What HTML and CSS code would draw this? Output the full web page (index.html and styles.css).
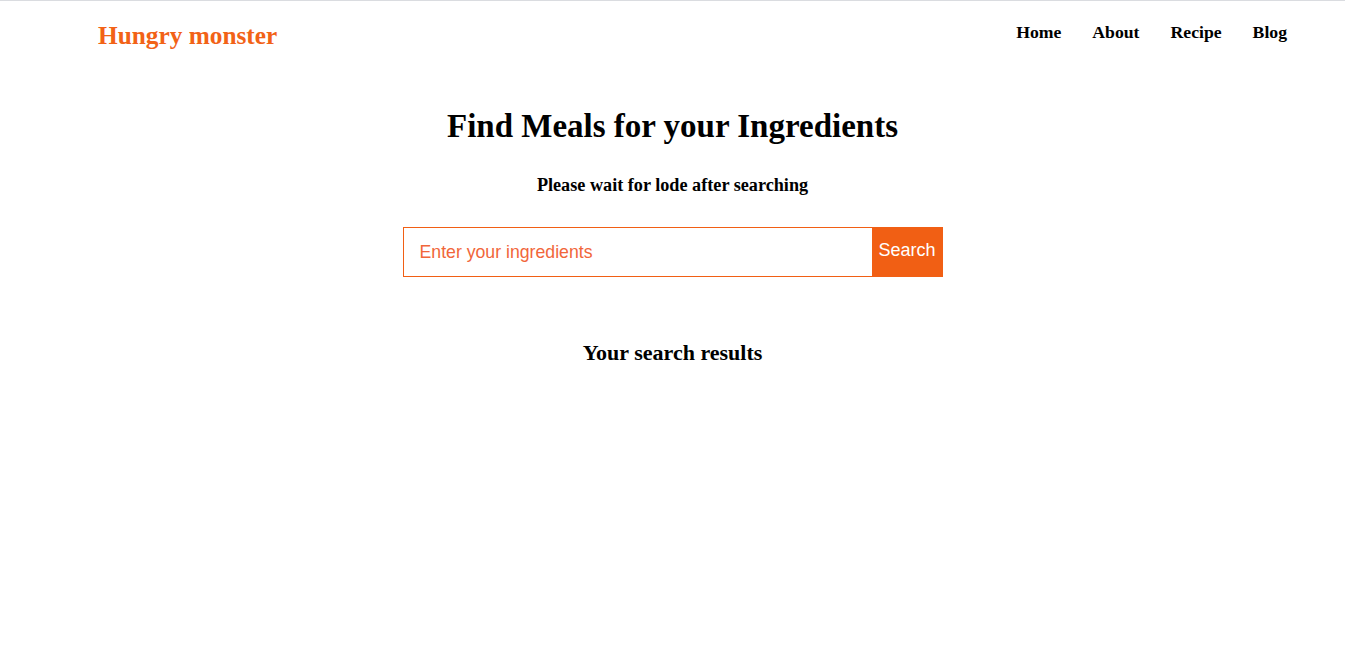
FILE: index.html
```html
<!DOCTYPE html>
<html>
<head>
<meta charset="utf-8">
<link rel="stylesheet" href="styles.css">
</head>
<body>
<header class="topbar">
  <div class="logo">Hungry monster</div>
  <nav class="nav">
    <a href="#">Home</a>
    <a href="#">About</a>
    <a href="#">Recipe</a>
    <a href="#">Blog</a>
  </nav>
</header>
<main class="main">
  <h1 class="title">Find Meals for your Ingredients</h1>
  <p class="note">Please wait for lode after searching</p>
  <div class="search">
    <input class="search-input" type="text" placeholder="Enter your ingredients">
    <button class="search-btn">Search</button>
  </div>
  <h2 class="results">Your search results</h2>
</main>
</body>
</html>
```
FILE: styles.css
```css
html, body {
  margin: 0;
  padding: 0;
  background: #fff;
}
body {
  font-family: "Liberation Serif", "Times New Roman", serif;
  border-top: 1px solid #dadce0;
}
.topbar {
  display: flex;
  justify-content: space-between;
  align-items: flex-start;
  padding: 20px 58px 0 98px;
  height: 47px;
}
.logo {
  color: #f26216;
  font-weight: bold;
  font-size: 25.3px;
  line-height: 29px;
}
.nav {
  display: flex;
  gap: 31px;
  padding-top: 0;
}
.nav a {
  color: #000;
  text-decoration: none;
  font-weight: bold;
  font-size: 17.7px;
  line-height: 22px;
}
.main {
  display: flex;
  flex-direction: column;
  align-items: center;
}
.title {
  font-size: 33px;
  margin: 40px 0 0;
  line-height: 37px;
}
.note {
  font-size: 18.2px;
  font-weight: bold;
  margin: 30px 0 0;
  line-height: 20px;
}
.search {
  display: flex;
  width: 540px;
  height: 50px;
  margin-top: 32px;
}
.search-input {
  flex: 1;
  box-sizing: border-box;
  height: 50px;
  border: 1px solid #f15f14;
  border-right: none;
  padding: 0 16px;
  font-family: "Liberation Sans", Arial, sans-serif;
  font-size: 17.7px;
  outline: none;
}
.search-input::placeholder {
  color: #f1663a;
}
.search-btn {
  width: 71px;
  height: 50px;
  border: none;
  background: #f15f14;
  color: #fff;
  font-family: "Liberation Sans", Arial, sans-serif;
  font-size: 18px;
  padding: 0 0 3px;
}
.results {
  font-size: 22px;
  margin: 63px 0 0;
  line-height: 25px;
}
```
